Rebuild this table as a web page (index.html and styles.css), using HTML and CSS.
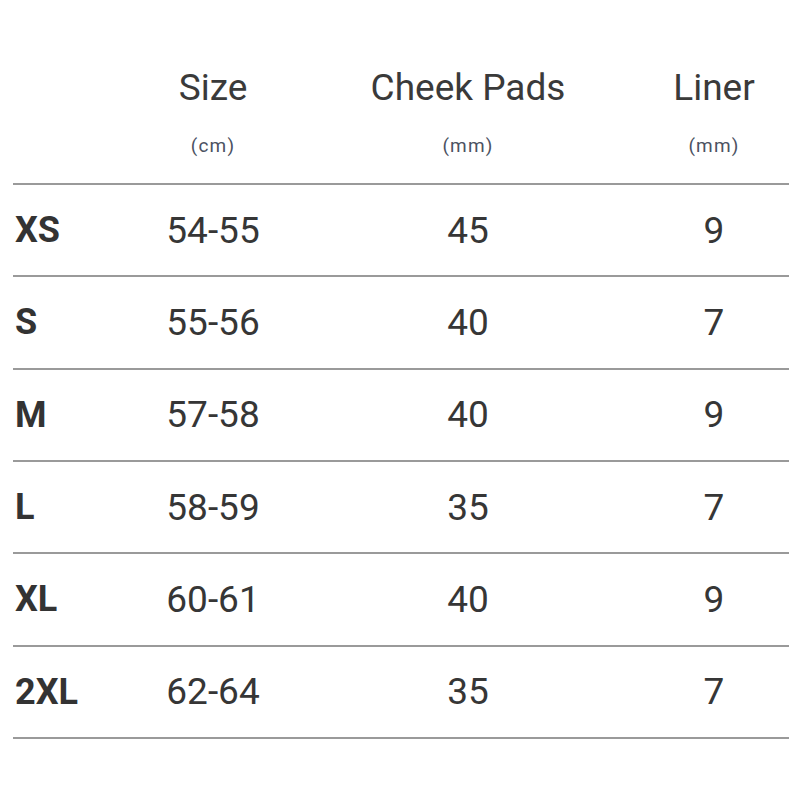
FILE: index.html
```html
<!DOCTYPE html>
<html>
<head>
<meta charset="utf-8">
<link rel="stylesheet" href="styles.css">
</head>
<body>
<div class="table">
  <div class="row head">
    <div class="cell label"></div>
    <div class="cell c2"><div class="title">Size</div><div class="unit">(cm)</div></div>
    <div class="cell c3"><div class="title">Cheek Pads</div><div class="unit">(mm)</div></div>
    <div class="cell c4"><div class="title">Liner</div><div class="unit">(mm)</div></div>
  </div>
  <div class="row"><div class="cell label">XS</div><div class="cell c2">54-55</div><div class="cell c3">45</div><div class="cell c4">9</div></div>
  <div class="row"><div class="cell label">S</div><div class="cell c2">55-56</div><div class="cell c3">40</div><div class="cell c4">7</div></div>
  <div class="row"><div class="cell label">M</div><div class="cell c2">57-58</div><div class="cell c3">40</div><div class="cell c4">9</div></div>
  <div class="row"><div class="cell label">L</div><div class="cell c2">58-59</div><div class="cell c3">35</div><div class="cell c4">7</div></div>
  <div class="row"><div class="cell label">XL</div><div class="cell c2">60-61</div><div class="cell c3">40</div><div class="cell c4">9</div></div>
  <div class="row"><div class="cell label">2XL</div><div class="cell c2">62-64</div><div class="cell c3">35</div><div class="cell c4">7</div></div>
</div>
</body>
</html>
```
FILE: styles.css
```css
html, body {
  margin: 0;
  padding: 0;
  background: #ffffff;
}
body {
  font-family: Roboto, "Liberation Sans", sans-serif;
  color: #363636;
}
.table {
  width: 776px;
  margin: 0 0 0 13px;
  padding-top: 66px;
}
.row {
  display: grid;
  grid-template-columns: 100px 200px 310px 166px;
  align-items: center;
  height: 92.33px;
  box-sizing: border-box;
  border-bottom: 2px solid #9a9a9a;
  font-size: 37px;
  font-weight: 400;
}
.row.head {
  height: auto;
  align-items: start;
  padding-bottom: 27px;
}
.cell {
  text-align: center;
}
.cell.label {
  text-align: left;
  padding-left: 2px;
  font-weight: 700;
  font-size: 36px;
  color: #333333;
}
.cell.c4 {
  padding-left: 16px;
}
.title {
  font-size: 37px;
  line-height: 44px;
  color: #3a3a3a;
}
.unit {
  margin-top: 26px;
  font-size: 19px;
  line-height: 20px;
  letter-spacing: 1.2px;
  color: #4c5262;
}
```
